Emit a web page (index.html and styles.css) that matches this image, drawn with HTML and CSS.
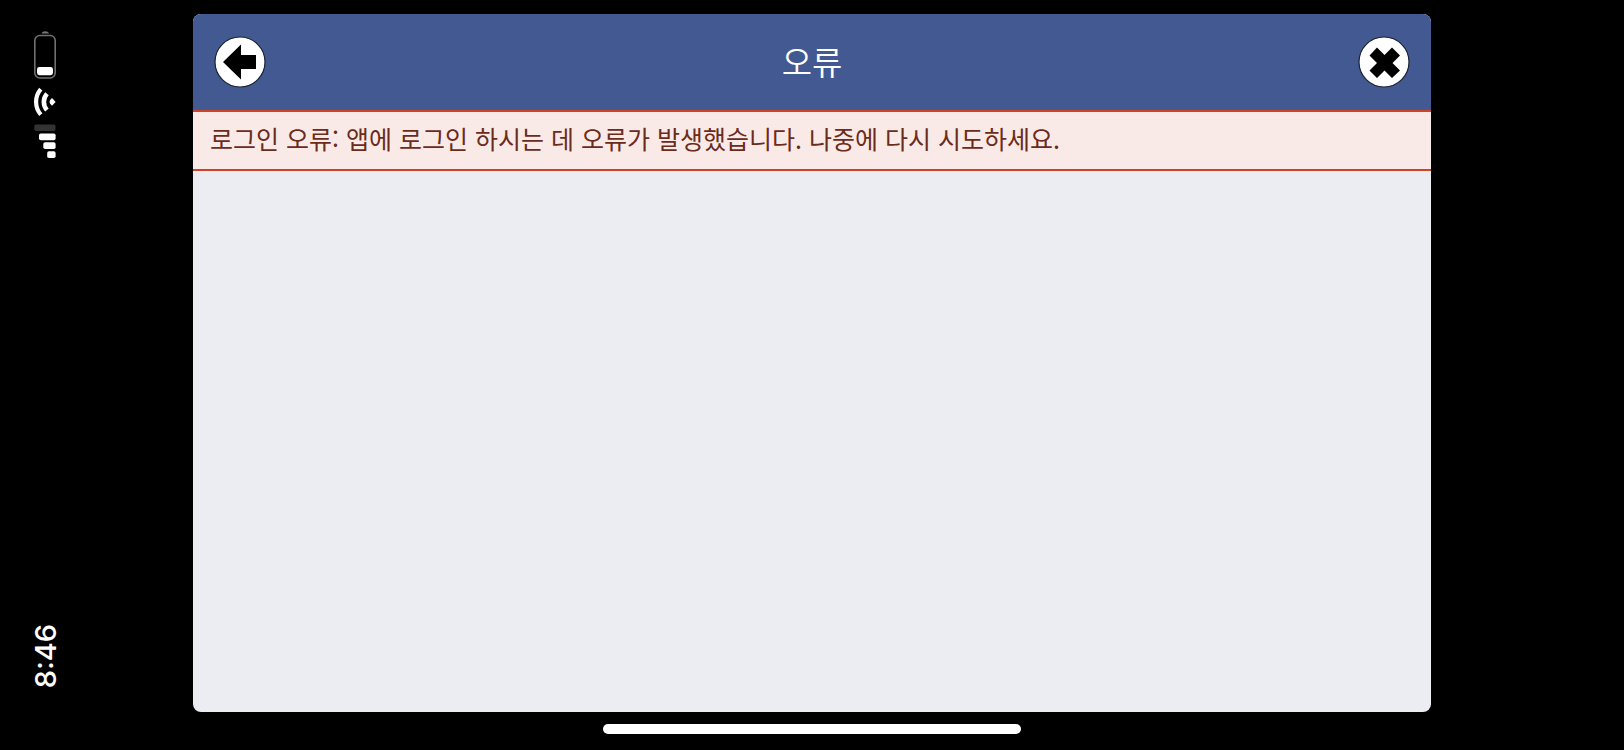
FILE: index.html
```html
<!DOCTYPE html>
<html lang="ko">
<head>
<meta charset="utf-8">
<meta name="viewport" content="width=device-width, initial-scale=1">
<title>오류</title>
<link rel="stylesheet" href="styles.css">
</head>
<body>
<div class="screen">
  <aside class="status">
    <div class="indicators">
      <svg class="battery" viewBox="0 0 22 50" role="img" aria-label="배터리">
        <path d="M7.500 3.500C8.500 0.500 14 0.500 15 3.500Z" fill="#777"/>
        <rect x="0.800" y="5.500" width="20.400" height="42.500" rx="5" fill="none" stroke="#707070" stroke-width="1.6"/>
        <rect x="3" y="37" width="16" height="8.200" rx="2.4" fill="#fff"/>
      </svg>
      <svg class="wifi" viewBox="0 0 22 30" role="img" aria-label="Wi-Fi">
        <path d="M6.800 2.200A19.500 19.500 0 0 0 6.800 27.600" fill="none" stroke="#fff" stroke-width="4.2"/>
        <path d="M13 6.800A12 12 0 0 0 13 23" fill="none" stroke="#fff" stroke-width="4.6"/>
        <path d="M21.600 14.900L18 18.800Q13 14.900 18 11Z" fill="#fff"/>
      </svg>
      <svg class="signal" viewBox="0 0 22 34" role="img" aria-label="신호 세기">
        <rect x="0.300" y="0.500" width="21.200" height="6.600" rx="1.8" fill="#333"/>
        <rect x="5" y="9.400" width="16.600" height="6.800" rx="1.8" fill="#fff"/>
        <rect x="9.300" y="18.300" width="12.300" height="6.800" rx="1.8" fill="#fff"/>
        <rect x="13.200" y="27.200" width="8.400" height="6.800" rx="1.8" fill="#fff"/>
      </svg>
    </div>
    <time class="clock" datetime="08:46">8:46</time>
  </aside>
  <main class="panel">
    <header class="bar">
      <button class="round" type="button" aria-label="뒤로">
        <svg viewBox="0 0 52 52">
          <circle cx="26" cy="26" r="25" fill="#fff" stroke="#1c2230" stroke-width="1.2"/>
          <path d="M9 26L27 8.5V19H42V33H27V43.5Z"/>
        </svg>
      </button>
      <h1 class="title">오류</h1>
      <button class="round" type="button" aria-label="닫기">
        <svg viewBox="0 0 52 52">
          <circle cx="26" cy="26" r="25" fill="#fff" stroke="#1c2230" stroke-width="1.2"/>
          <path d="M19 11.500L26.500 19L34 11.500L42 19.500L34.500 27L42 34.500L34 42L26.500 34.500L19 42L11.500 34.500L19 27L11.500 19.500Z"/>
        </svg>
      </button>
    </header>
    <p class="alert" role="alert">로그인 오류: 앱에 로그인 하시는 데 오류가 발생했습니다. 나중에 다시 시도하세요.</p>
  </main>
  <div class="home"></div>
</div>
</body>
</html>
```
FILE: styles.css
```css
* {
  box-sizing: border-box;
}

body {
  margin: 0;
  background: #000;
  font-family: "Noto Sans CJK KR", sans-serif;
}

.screen {
  display: grid;
  grid-template-columns: 193px 1fr 193px;
  grid-template-rows: 1fr 10px;
  row-gap: 12px;
  min-height: 100vh;
  padding: 14px 0 16px;
}

.status {
  display: flex;
  flex-direction: column;
  justify-content: space-between;
  align-items: flex-start;
  padding: 16px 0 24px 34px;
}

.indicators {
  display: flex;
  flex-direction: column;
  gap: 7px;
}

.indicators svg {
  display: block;
  width: 22px;
}

.battery {
  height: 50px;
}

.wifi {
  height: 30px;
}

.signal {
  height: 34px;
}

.clock {
  color: #fff;
  font: 500 29px/24px Inter, sans-serif;
  writing-mode: vertical-rl;
  transform: rotate(180deg);
}

.panel {
  overflow: hidden;
  border-radius: 8px;
  background: #ecedf3;
}

.bar {
  display: flex;
  align-items: center;
  justify-content: space-between;
  height: 96px;
  padding: 0 21px 1px;
  background: #425992;
}

.round {
  width: 52px;
  height: 52px;
  padding: 0;
  border: 0;
  border-radius: 50%;
  background: none;
}

.round svg {
  display: block;
}

.title {
  margin: 0;
  padding-bottom: 2px;
  color: #fff;
  font-size: 33px;
  font-weight: 350;
  line-height: 48px;
}

.alert {
  margin: 0;
  padding: 8px 17px 13px;
  border: solid #cc4527;
  border-width: 2px 0;
  background: #faeae7;
  color: #6b2c1c;
  font-size: 25px;
  line-height: 36px;
}

.home {
  grid-column: 2;
  justify-self: center;
  width: 418px;
  max-width: 100%;
  border-radius: 5px;
  background: #fff;
}
```
